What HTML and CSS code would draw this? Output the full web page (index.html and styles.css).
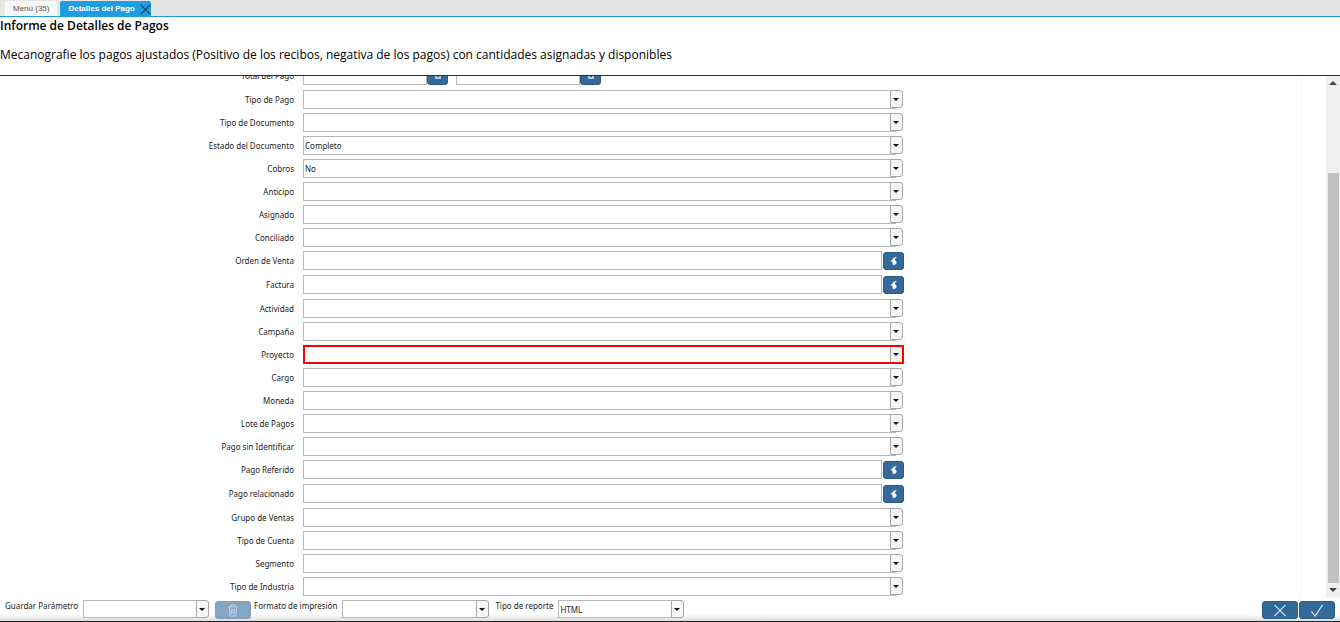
FILE: index.html
```html
<!DOCTYPE html>
<html lang="es">
<head>
    <meta charset="UTF-8">
    <meta name="viewport" content="width=device-width, initial-scale=1.0">
    <title>Detalles del Pago</title>
    <link rel="stylesheet" href="styles.css">
</head>
<body>
    <svg class="symbols" aria-hidden="true">
        <symbol id="icon-lookup" viewBox="0 0 10 10">
            <path d="M8 1C5.500 1 4 2 3.500 3.500L1.500 5L3.200 5.600L4 9C6.500 9 7.800 7.800 7.600 6.200C7.400 5 6.800 4.500 5.800 4.200C6 3 6.800 2 8 1Z" fill="#fff"/>
        </symbol>
        <symbol id="icon-calc" viewBox="0 0 10 10">
            <path d="M2 0H8V8H2Z M4 4H6V6H4Z" fill="#b4c8da" fill-rule="evenodd"/>
        </symbol>
        <symbol id="icon-trash" viewBox="0 0 12 14">
            <path d="M1 3H11M4 3V1H8V3M2 3L3 13H9L10 3M4.500 5V11M6 5V11M7.500 5V11" fill="none" stroke="#c3d3e1"/>
        </symbol>
        <symbol id="icon-cross" viewBox="0 0 14 14">
            <path d="M1 1L13 13M13 1L1 13" fill="none" stroke="currentColor" stroke-width="1.300"/>
        </symbol>
        <symbol id="icon-check" viewBox="0 0 14 14">
            <path d="M1 8L5 13L13 1" fill="none" stroke="currentColor" stroke-width="1.300"/>
        </symbol>
    </svg>

    <nav class="tabs">
        <a class="tab" href="#menu">Menú (35)</a>
        <a class="tab active" href="#pago">Detalles del Pago <svg><use href="#icon-cross"/></svg></a>
    </nav>

    <header class="info">
        <h1>Informe de Detalles de Pagos</h1>
        <p>Mecanografie los pagos ajustados (Positivo de los recibos, negativa de los pagos) con cantidades asignadas y disponibles</p>
    </header>

    <main class="params">
        <form class="fields" id="params">
            <div class="row lookup-row">
                <label for="total">Total del Pago</label>
                <div class="range">
                    <div class="lookup"><input type="text" id="total"><button type="button" aria-label="Calculadora"><svg><use href="#icon-calc"/></svg></button></div>
                    <div class="lookup"><input type="text" aria-label="Total del Pago hasta"><button type="button" aria-label="Calculadora"><svg><use href="#icon-calc"/></svg></button></div>
                </div>
            </div>
            <div class="row">
                <label for="tipo-pago">Tipo de Pago</label>
                <div class="combo"><select id="tipo-pago"><option></option></select></div>
            </div>
            <div class="row">
                <label for="tipo-documento">Tipo de Documento</label>
                <div class="combo"><select id="tipo-documento"><option></option></select></div>
            </div>
            <div class="row">
                <label for="estado">Estado del Documento</label>
                <div class="combo"><select id="estado"><option>Completo</option></select></div>
            </div>
            <div class="row">
                <label for="cobros">Cobros</label>
                <div class="combo"><select id="cobros"><option>No</option></select></div>
            </div>
            <div class="row">
                <label for="anticipo">Anticipo</label>
                <div class="combo"><select id="anticipo"><option></option></select></div>
            </div>
            <div class="row">
                <label for="asignado">Asignado</label>
                <div class="combo"><select id="asignado"><option></option></select></div>
            </div>
            <div class="row">
                <label for="conciliado">Conciliado</label>
                <div class="combo"><select id="conciliado"><option></option></select></div>
            </div>
            <div class="row lookup-row">
                <label for="orden">Orden de Venta</label>
                <div class="lookup"><input type="text" id="orden"><button type="button" aria-label="Buscar orden"><svg><use href="#icon-lookup"/></svg></button></div>
            </div>
            <div class="row lookup-row">
                <label for="factura">Factura</label>
                <div class="lookup"><input type="text" id="factura"><button type="button" aria-label="Buscar factura"><svg><use href="#icon-lookup"/></svg></button></div>
            </div>
            <div class="row">
                <label for="actividad">Actividad</label>
                <div class="combo"><select id="actividad"><option></option></select></div>
            </div>
            <div class="row">
                <label for="campana">Campaña</label>
                <div class="combo"><select id="campana"><option></option></select></div>
            </div>
            <div class="row">
                <label for="proyecto">Proyecto</label>
                <div class="combo invalid"><select id="proyecto"><option></option></select></div>
            </div>
            <div class="row">
                <label for="cargo">Cargo</label>
                <div class="combo"><select id="cargo"><option></option></select></div>
            </div>
            <div class="row">
                <label for="moneda">Moneda</label>
                <div class="combo"><select id="moneda"><option></option></select></div>
            </div>
            <div class="row">
                <label for="lote">Lote de Pagos</label>
                <div class="combo"><select id="lote"><option></option></select></div>
            </div>
            <div class="row">
                <label for="sin-identificar">Pago sin Identificar</label>
                <div class="combo"><select id="sin-identificar"><option></option></select></div>
            </div>
            <div class="row lookup-row">
                <label for="referido">Pago Referido</label>
                <div class="lookup"><input type="text" id="referido"><button type="button" aria-label="Buscar pago referido"><svg><use href="#icon-lookup"/></svg></button></div>
            </div>
            <div class="row lookup-row">
                <label for="relacionado">Pago relacionado</label>
                <div class="lookup"><input type="text" id="relacionado"><button type="button" aria-label="Buscar pago relacionado"><svg><use href="#icon-lookup"/></svg></button></div>
            </div>
            <div class="row">
                <label for="grupo">Grupo de Ventas</label>
                <div class="combo"><select id="grupo"><option></option></select></div>
            </div>
            <div class="row">
                <label for="cuenta">Tipo de Cuenta</label>
                <div class="combo"><select id="cuenta"><option></option></select></div>
            </div>
            <div class="row">
                <label for="segmento">Segmento</label>
                <div class="combo"><select id="segmento"><option></option></select></div>
            </div>
            <div class="row">
                <label for="industria">Tipo de Industria</label>
                <div class="combo"><select id="industria"><option></option></select></div>
            </div>
        </form>
        <div class="gutter"></div>
        <div class="scrollbar">
            <span class="arrow up"></span>
            <span class="thumb"></span>
            <span class="arrow down"></span>
        </div>
    </main>

    <footer class="actions">
        <label for="guardar">Guardar Parámetro</label>
        <div class="combo"><select id="guardar"><option></option></select></div>
        <button type="button" class="btn" disabled aria-label="Borrar"><svg><use href="#icon-trash"/></svg></button>
        <label for="formato">Formato de impresión</label>
        <div class="combo wide"><select id="formato"><option></option></select></div>
        <label for="reporte">Tipo de reporte</label>
        <div class="combo"><select id="reporte"><option>HTML</option></select></div>
        <div class="confirm">
            <button type="button" class="btn" aria-label="Cancelar"><svg><use href="#icon-cross"/></svg></button>
            <button type="submit" form="params" class="btn" aria-label="Aceptar"><svg><use href="#icon-check"/></svg></button>
        </div>
    </footer>
</body>
</html>
```
FILE: styles.css
```css
*,
*::before {
    box-sizing: border-box;
}
body {
    display: flex;
    flex-direction: column;
    height: 100vh;
    margin: 0;
    overflow: hidden;
    font-family: "Noto Sans", "Open Sans", sans-serif;
    font-size: 8px;
    color: #222;
    background-color: #fff;
}
.symbols {
    position: absolute;
    width: 0;
    height: 0;
}

/* tabs */
.tabs {
    display: flex;
    align-items: flex-end;
    gap: 3px;
    height: 17px;
    padding-left: 5px;
    background-color: #e6e6e6;
    border-bottom: 1px solid #209ce0;
}
.tab {
    display: flex;
    align-items: center;
    height: 15px;
    padding: 0 8px;
    font-family: "Liberation Sans", Arial, sans-serif;
    font-size: 8px;
    color: #555;
    text-decoration: none;
    background-color: #f7f7f7;
    border-radius: 2px 2px 0 0;
}
.tab.active {
    gap: 5px;
    padding-right: 0;
    font-weight: bold;
    color: #fff;
    background-color: #209ce0;
}
.tab svg {
    width: 11px;
    height: 11px;
    margin-top: 2px;
    color: #1a3f5c;
}

/* title and description */
.info {
    height: 59px;
    font-family: "Open Sans", "Noto Sans", sans-serif;
    color: #000;
    border-bottom: 1px solid #003764;
}
.info h1 {
    margin: 0;
    font-size: 12px;
    font-weight: 600;
    line-height: 17px;
}
.info p {
    margin: 12px 0 0;
    font-size: 12px;
    line-height: 17px;
}

/* parameter list, kept scrolled to its end */
.params {
    display: flex;
    flex: 1;
    min-height: 0;
    overflow: hidden;
}
.fields {
    display: flex;
    flex: 1;
    flex-direction: column;
    justify-content: flex-end;
    border-right: 1px solid #f5f5f5;
}
.row {
    display: grid;
    flex: none;
    grid-template-columns: 294fr 601fr 387fr;
    column-gap: 9px;
    height: 23px;
}
.row:last-child {
    height: 21px;
}
.lookup-row {
    height: 24px;
}
.row > label {
    line-height: 19px;
    text-align: right;
}
.combo {
    position: relative;
    height: 19px;
}
select,
input {
    display: block;
    height: 19px;
    margin: 0;
    padding: 0 1px;
    font-family: inherit;
    font-size: inherit;
    color: #222;
    background-color: #fff;
    border: 1px solid #b8b8b8;
    border-radius: 0;
    appearance: none;
}
select {
    width: calc(100% - 8px);
}
/* arrow button of the combo */
.combo::before {
    content: "";
    position: absolute;
    top: 0;
    right: 1px;
    width: 13px;
    height: 18px;
    background-color: #f7f7f7;
    border: 1px solid #a6a6a6;
    border-radius: 0 3px 3px 0;
    pointer-events: none;
}
.combo::after {
    content: "";
    position: absolute;
    top: 8px;
    right: 5px;
    border: 3px solid transparent;
    border-top-color: #111;
    border-bottom: 0;
    pointer-events: none;
}
.combo.invalid {
    outline: 2px solid #f00;
    outline-offset: -2px;
}
.combo.invalid::before {
    top: 2px;
    right: 2px;
    width: 12px;
    height: 15px;
    border-width: 0 0 0 1px;
    border-radius: 0;
}
.lookup {
    display: flex;
    flex: 1;
    gap: 1px;
    min-width: 0;
}
.lookup input {
    flex: 1;
    min-width: 0;
}
.lookup button {
    display: flex;
    align-items: center;
    justify-content: center;
    width: 21px;
    height: 18px;
    margin-top: 1px;
    padding: 0;
    background-color: #336a99;
    border: 1px solid #2a5a84;
    border-radius: 3px;
}
.lookup svg {
    width: 10px;
    height: 10px;
}
.range {
    display: flex;
    gap: 8px;
    width: 298px;
}
.range .lookup {
    gap: 0;
}

/* scrollbar */
.gutter {
    width: 25px;
}
.scrollbar {
    display: flex;
    flex-direction: column;
    align-items: center;
    width: 14px;
    padding: 5px 0 6px;
    background-color: #f0f0f0;
}
.thumb {
    width: 11px;
    height: 410px;
    margin-top: auto;
    margin-bottom: 5px;
    background-color: #c1c1c1;
}
.arrow {
    border: 4px solid transparent;
}
.arrow.up {
    border-top: 0;
    border-bottom-color: #444;
}
.arrow.down {
    border-bottom: 0;
    border-top-color: #444;
}

/* bottom bar */
.actions {
    display: flex;
    height: 24px;
    padding: 2px 5px 0;
    background: linear-gradient(#fff 70%, #ddd);
    border-bottom: 1px solid #222;
}
.actions label {
    line-height: 12px;
}
.actions .combo {
    width: 127px;
    height: 18px;
    margin: 0 5px;
}
.actions select {
    height: 18px;
}
.actions .combo.wide {
    width: 148px;
}
.btn {
    display: flex;
    align-items: center;
    justify-content: center;
    width: 36px;
    height: 18px;
    margin: 1px 0 0;
    padding: 0;
    color: #d6e2ec;
    background-color: #336a99;
    border: 1px solid #2a5a84;
    border-radius: 3px;
}
.btn:disabled {
    margin-right: 3px;
    background-color: #85a6c2;
    border-color: #7fa0bd;
}
.btn svg {
    width: 14px;
    height: 13px;
}
.confirm {
    display: flex;
    gap: 1px;
    margin-left: auto;
}
```
